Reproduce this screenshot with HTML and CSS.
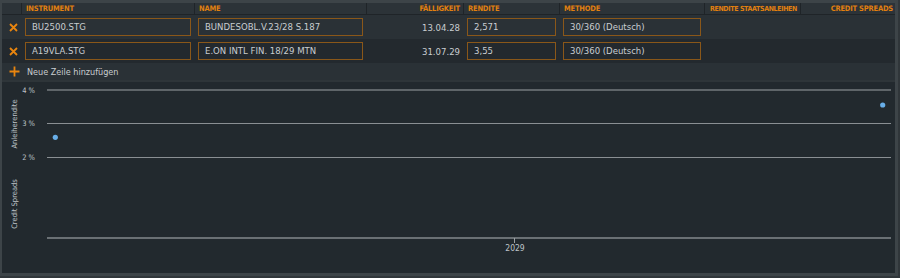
FILE: index.html
```html
<!DOCTYPE html>
<html lang="de">
<head>
  <meta charset="UTF-8">
  <title>Credit Spreads</title>
  <link rel="stylesheet" href="styles.css">
</head>
<body>
  <div class="frame">
    <div class="panel">
      <div class="grid">
        <div class="hcell"></div>
        <div class="hcell">Instrument</div>
        <div class="hcell">Name</div>
        <div class="hcell right">Fälligkeit</div>
        <div class="hcell">Rendite</div>
        <div class="hcell">Methode</div>
        <div class="hcell right tight">Rendite Staatsanleihen</div>
        <div class="hcell right last">Credit Spreads</div>

        <div class="cell odd icon-cell">
          <svg class="remove" width="9" height="9" viewBox="0 0 9 9"><path d="M1 1L8 8M8 1L1 8"/></svg>
        </div>
        <div class="cell odd"><div class="field">BU2500.STG</div></div>
        <div class="cell odd"><div class="field">BUNDESOBL.V.23/28 S.187</div></div>
        <div class="cell odd right">13.04.28</div>
        <div class="cell odd"><div class="field">2,571</div></div>
        <div class="cell odd"><div class="field">30/360 (Deutsch)</div></div>
        <div class="cell odd"></div>
        <div class="cell odd"></div>

        <div class="cell even icon-cell">
          <svg class="remove" width="9" height="9" viewBox="0 0 9 9"><path d="M1 1L8 8M8 1L1 8"/></svg>
        </div>
        <div class="cell even"><div class="field">A19VLA.STG</div></div>
        <div class="cell even"><div class="field">E.ON INTL FIN. 18/29 MTN</div></div>
        <div class="cell even right">31.07.29</div>
        <div class="cell even"><div class="field">3,55</div></div>
        <div class="cell even"><div class="field">30/360 (Deutsch)</div></div>
        <div class="cell even"></div>
        <div class="cell even"></div>
      </div>
      <div class="add-row">
        <svg class="plus" width="11" height="11" viewBox="0 0 11 11"><path d="M5.5 0.5V10.5M0.5 5.5H10.5"/></svg>
        <span>Neue Zeile hinzufügen</span>
      </div>
      <div class="chart">
        <svg width="893" height="191" viewBox="0 0 893 191">
          <line x1="45" y1="8" x2="889" y2="8" class="grid-top"/>
          <line x1="45" y1="41.5" x2="889" y2="41.5" class="grid-line"/>
          <line x1="45" y1="75.5" x2="889" y2="75.5" class="grid-line"/>
          <line x1="45" y1="156" x2="889" y2="156" class="axis"/>
          <line x1="512.5" y1="156" x2="512.5" y2="161" class="tick"/>
          <text x="33" y="11" class="ylab" text-anchor="end">4 %</text>
          <text x="33" y="44" class="ylab" text-anchor="end">3 %</text>
          <text x="33" y="78" class="ylab" text-anchor="end">2 %</text>
          <text transform="translate(15 42) rotate(-90)" class="ttl" text-anchor="middle">Anleiherendite</text>
          <text transform="translate(15 122) rotate(-90)" class="ttl" text-anchor="middle">Credit Spreads</text>
          <text x="513" y="169" class="xlab" text-anchor="middle">2029</text>
          <circle cx="53.3" cy="55.3" r="2.6" class="dot"/>
          <circle cx="880.7" cy="23" r="2.6" class="dot"/>
        </svg>
      </div>
    </div>
  </div>
</body>
</html>
```

FILE: styles.css
```css
body {
  margin: 0;
  background: #30363a;
  font-family: "DejaVu Sans Condensed", "Liberation Sans Narrow", Roboto, sans-serif;
  font-stretch: condensed;
  color: #c9cdd1;
}
.frame {
  width: 898px;
  height: 276px;
  background: #3d4448;
  padding: 3px 0 0 2px;
  box-sizing: border-box;
}
.panel {
  width: 893px;
  height: 270px;
  background: #22292e;
  display: flex;
  flex-direction: column;
}
.grid {
  display: grid;
  grid-template-columns: 20px 173px 172px 97px 96px 145px 96px 1fr;
}
.hcell {
  height: 11px;
  line-height: 12px;
  font-size: 7.5px;
  font-weight: bold;
  letter-spacing: -0.2px;
  text-transform: uppercase;
  color: #e2800f;
  background: #2c3338;
  border-right: 1px solid #1f2428;
  border-bottom: 1px solid #1f2428;
  padding: 0 3px 0 4px;
  white-space: nowrap;
  overflow: hidden;
}
.hcell.tight {
  font-size: 7px;
  letter-spacing: -0.35px;
  padding: 0 3px 0 0;
}
.hcell.last {
  border-right: none;
  padding-right: 2px;
}
.right {
  text-align: right;
}
.cell {
  height: 24px;
  display: flex;
  align-items: center;
  padding: 0 4px 0 3px;
  font-size: 9.5px;
}
.cell.right {
  justify-content: flex-end;
}
.odd {
  background: #2a3136;
}
.even {
  background: #23292e;
}
.field {
  flex: 1;
  height: 18px;
  box-sizing: border-box;
  border: 1px solid #8a5719;
  line-height: 16px;
  padding-left: 6px;
  white-space: nowrap;
}
.icon-cell {
  justify-content: center;
  padding: 0 0 0 2px;
}
.remove path, .plus path {
  stroke: #e8850f;
  stroke-width: 1.8;
  fill: none;
}
.add-row {
  height: 18px;
  background: #2a3136;
  display: flex;
  align-items: center;
  gap: 7px;
  font-size: 9px;
  border-bottom: 2px solid #2e3539;
}
.plus {
  margin-left: 7px;
}
.chart {
  flex: 1;
}
.chart svg {
  display: block;
}
.grid-top {
  stroke: #5f6569;
  stroke-width: 2;
}
.grid-line {
  stroke: #8a8f93;
  stroke-width: 1;
}
.axis {
  stroke: #6a7074;
  stroke-width: 2;
}
.tick {
  stroke: #9aa0a4;
  stroke-width: 1;
}
.ylab, .ttl, .xlab {
  fill: #bfc4c8;
  font-size: 7.5px;
}
.xlab {
  font-size: 8.5px;
}
.dot {
  fill: #68aee8;
}
```
